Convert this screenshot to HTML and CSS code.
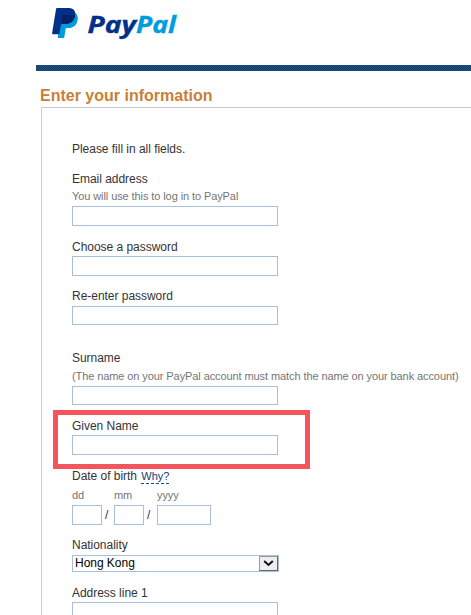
FILE: index.html
```html
<!DOCTYPE html>
<html lang="en">
<head>
<meta charset="utf-8">
<title>Enter your information</title>
<link rel="stylesheet" href="styles.css">
</head>
<body>
<header class="header">
  <svg class="logo" width="128" height="36" viewBox="0 0 128 36" role="img" aria-label="PayPal">
    <path fill="#009cde" d="M24 8.500c3.500 1.500 4.300 4.200 3.500 8-1 5.400-4.600 7.600-9.600 7.600h-1.100c-.8 0-1.100.4-1.200 1.100l-1.200 7.500c-.1.8-.5 1.300-1.300 1.300H8.600c-.6 0-.9-.4-.8-1L10.800 12z"/>
    <path fill="#003087" d="M7.300 4h10.500c5.500 0 8.200 2.600 7.300 7.600-1 5.800-4.700 8.400-10.300 8.400h-2.700c-.8 0-1.200.4-1.300 1.200l-1.200 7.800c-.1.900-.6 1.300-1.400 1.300H3c-.7 0-1-.4-.9-1.100L6 5.200C6.100 4.400 6.500 4 7.300 4z"/>
    <path fill="#012169" d="M12.600 10.900h7.800c1.800 0 3.400.2 4.700.7-1 5.800-4.700 8.400-10.300 8.400h-2.700c-.6 0-1 .3-1.200.8l1.500-9.800z"/>
    <text class="wordmark pay" x="37.500" y="29" textLength="48.500" lengthAdjust="spacingAndGlyphs">Pay</text>
    <text class="wordmark pal" x="86" y="29" textLength="40" lengthAdjust="spacingAndGlyphs">Pal</text>
  </svg>
</header>
<div class="bar"></div>
<h1 class="title">Enter your information</h1>
<form class="panel">
  <p class="intro">Please fill in all fields.</p>
  <div class="field email">
    <label class="label" for="email">Email address</label>
    <span class="hint">You will use this to log in to PayPal</span>
    <input class="input" id="email" type="text">
  </div>
  <div class="field">
    <label class="label" for="password">Choose a password</label>
    <input class="input" id="password" type="password">
  </div>
  <div class="field repeat">
    <label class="label" for="repeat">Re-enter password</label>
    <input class="input short" id="repeat" type="password">
  </div>
  <div class="field surname">
    <label class="label" for="surname">Surname</label>
    <span class="hint">(The name on your PayPal account must match the name on your bank account)</span>
    <input class="input short" id="surname" type="text">
  </div>
  <div class="field given">
    <label class="label" for="given">Given Name</label>
    <input class="input" id="given" type="text">
  </div>
  <div class="field">
    <span class="label">Date of birth <a class="why">Why?</a></span>
    <div class="dob">
      <label class="part day"><span class="hint">dd</span><input class="input" type="text"></label>
      <span class="slash">/</span>
      <label class="part month"><span class="hint">mm</span><input class="input" type="text"></label>
      <span class="slash">/</span>
      <label class="part year"><span class="hint">yyyy</span><input class="input" type="text"></label>
    </div>
  </div>
  <div class="field nationality">
    <span class="label">Nationality</span>
    <div class="select" role="combobox" aria-label="Nationality">
      <span class="value">Hong Kong</span>
      <span class="arrow"><svg width="11" height="7" viewBox="0 0 11 7"><path d="M1.200 1l4.300 4L9.800 1" fill="none" stroke="#111" stroke-width="2"/></svg></span>
    </div>
  </div>
  <div class="field address">
    <label class="label" for="address">Address line 1</label>
    <input class="input" id="address" type="text">
  </div>
</form>
</body>
</html>
```
FILE: styles.css
```css
* { box-sizing: border-box; }

body {
  margin: 0;
  height: 615px;
  overflow: hidden;
  background: #fff;
  color: #333;
  font-family: "Liberation Sans", Arial, sans-serif;
  font-size: 12px;
}

.header {
  height: 65px;
  padding: 4px 0 0 50px;
}

.logo { display: block; }

.wordmark {
  font-family: "Open Sans", sans-serif;
  font-size: 24px;
  font-weight: 700;
  font-style: italic;
  stroke-width: 0.4px;
}

.pay { fill: #003087; stroke: #003087; }
.pal { fill: #009cde; stroke: #009cde; }

.bar {
  height: 6px;
  margin-left: 36px;
  background: repeating-conic-gradient(#0e3b6b 0 25%, #28547f 0 50%) 0 0 / 2px 2px;
}

.title {
  margin: 0 0 0 40px;
  height: 36px;
  padding-top: 15px;
  color: #c88039;
  font-size: 16px;
  line-height: 20px;
}

.panel {
  height: 508px;
  margin-left: 41px;
  padding: 32px 0 0 30px;
  border: 1px solid #ccc;
  border-width: 1px 0 0 1px;
}

.intro {
  height: 18px;
  margin: 0 0 12px;
  letter-spacing: -0.03px;
  line-height: 18px;
}

.field {
  display: flex;
  flex-direction: column;
  align-items: flex-start;
  margin-bottom: 11px;
}

.label {
  height: 18px;
  letter-spacing: -0.03px;
  line-height: 18px;
  white-space: nowrap;
}

.hint {
  height: 18px;
  color: #757575;
  font-size: 11px;
  letter-spacing: -0.09px;
  line-height: 17px;
  white-space: nowrap;
}

.input {
  display: block;
  width: 206px;
  height: 20px;
  margin: 0;
  padding: 0 2px;
  border: 1px solid #a9c0d8;
  background: #fff;
}

.short { height: 19px; }

.email { margin-bottom: 12px; }
.repeat { margin-bottom: 24px; }
.repeat .label { height: 19px; }
.surname .label { height: 19px; }
.surname { margin-bottom: 12px; }

.given {
  position: relative;
  width: 206px;
  margin-bottom: 12px;
}

.given::after {
  content: "";
  box-sizing: border-box;
  position: absolute;
  top: -7px;
  left: -19px;
  width: 257px;
  height: 59px;
  border: 5px solid #f4545c;
  pointer-events: none;
}

.why {
  display: inline-block;
  height: 17px;
  margin-left: 1px;
  border-bottom: 1px dashed #1a4b83;
  color: #1a3c73;
  font-size: 11px;
}

.dob {
  display: flex;
  align-items: flex-end;
  margin-top: 2px;
}

.part {
  display: flex;
  flex-direction: column;
}

.day .input, .month .input { width: 30px; }
.year .input { width: 54px; }
.year { margin-left: 1px; }

.slash {
  width: 12px;
  height: 20px;
  padding-left: 3px;
  line-height: 20px;
}

.nationality { margin-bottom: 12px; }
.nationality .label { height: 19px; }

.select {
  display: flex;
  justify-content: space-between;
  width: 207px;
  height: 17px;
  border: 1px solid #a9c0d8;
  color: #000;
}

.value {
  padding-left: 2px;
  letter-spacing: -0.03px;
  line-height: 14px;
}

.arrow {
  display: flex;
  align-items: center;
  justify-content: center;
  width: 19px;
  height: 15px;
  border: 1px solid #999;
  border-right-color: #666;
  border-bottom-color: #666;
  background: #eee;
}

.address {
  height: 31px;
  margin: 0;
  overflow: hidden;
}

.address .input { flex-shrink: 0; }
```
